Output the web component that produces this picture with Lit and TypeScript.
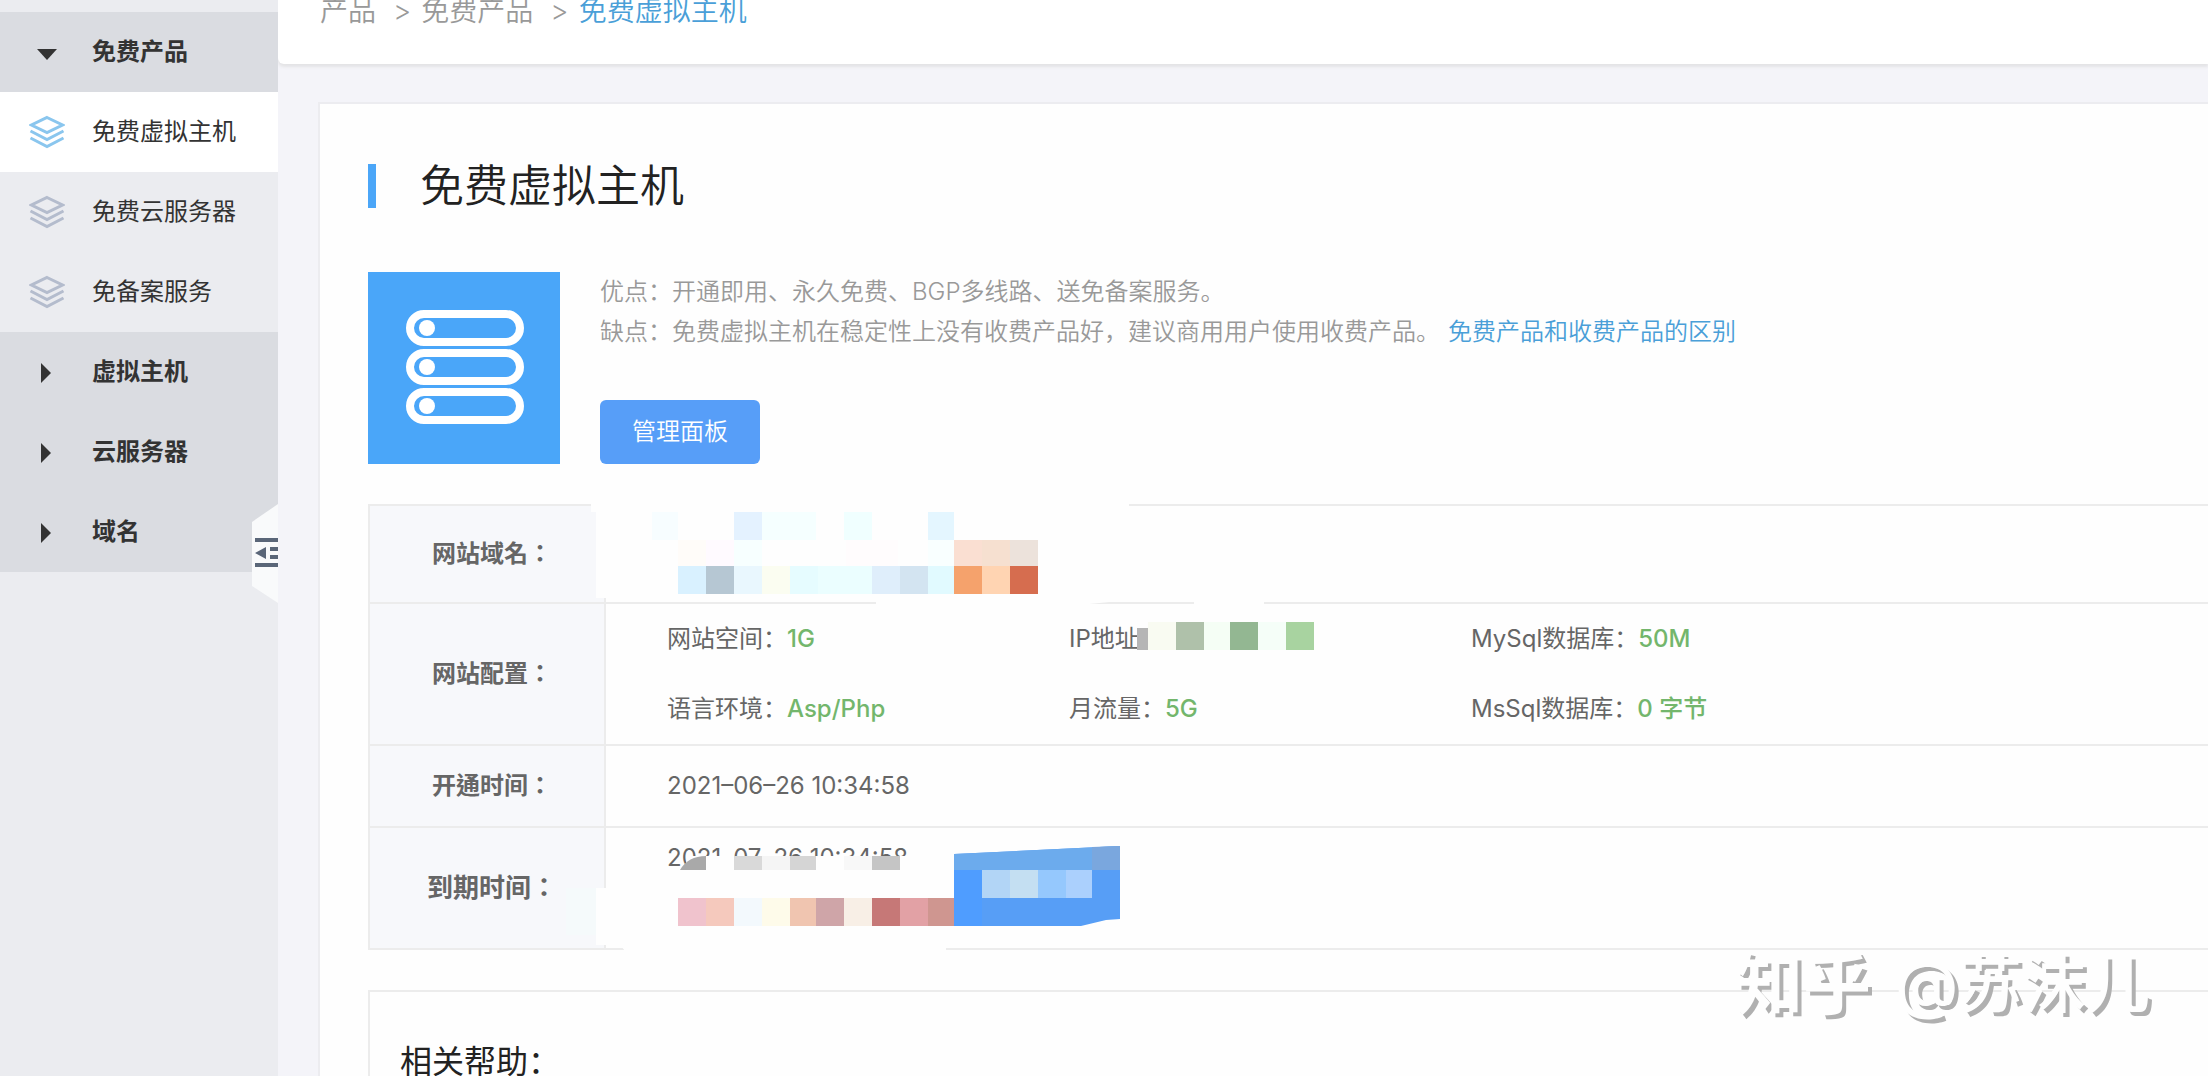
import { LitElement, html, css, svg } from "lit";
import { customElement, state } from "lit/decorators.js";

type Block = [x: number, y: number, width: number, height: number, color: string];

const domainBlocks: Block[] = [
  [652, 512, 26, 28, "#f7fdff"],
  [734, 512, 28, 28, "#e4f2ff"],
  [762, 512, 54, 28, "#f5ffff"],
  [844, 512, 28, 28, "#f0ffff"],
  [928, 512, 26, 28, "#e4f6ff"],
  [678, 540, 28, 26, "#fffcf9"],
  [706, 540, 28, 26, "#fffaff"],
  [734, 540, 28, 26, "#f7ffff"],
  [846, 540, 52, 26, "#fffcfd"],
  [928, 540, 26, 26, "#f9ffff"],
  [954, 540, 28, 26, "#fadfd2"],
  [982, 540, 28, 26, "#f6e0d0"],
  [1010, 540, 28, 26, "#ece2db"],
  [678, 566, 28, 28, "#d9f1ff"],
  [706, 566, 28, 28, "#b6c7d3"],
  [734, 566, 28, 28, "#e9f7fe"],
  [762, 566, 28, 28, "#fbfdf1"],
  [790, 566, 28, 28, "#e6fcff"],
  [818, 566, 54, 28, "#ebfeff"],
  [872, 566, 28, 28, "#dfeefb"],
  [900, 566, 28, 28, "#d3e4f1"],
  [928, 566, 26, 28, "#e1faff"],
  [954, 566, 28, 28, "#f5a26c"],
  [982, 566, 28, 28, "#ffd4b2"],
  [1010, 566, 28, 28, "#d66d4f"],
];

const addressBlocks: Block[] = [
  [1137, 628, 11, 22, "#b5b5b5"],
  [1148, 622, 28, 28, "#f9fbf2"],
  [1176, 622, 28, 28, "#afc1aa"],
  [1204, 622, 26, 28, "#f5fef5"],
  [1230, 622, 28, 28, "#93b792"],
  [1258, 622, 28, 28, "#f5fef8"],
  [1286, 622, 28, 28, "#a8d3a0"],
];

const expiryBlocks: Block[] = [
  [734, 856, 28, 14, "#d9d9d9"],
  [762, 856, 28, 14, "#f5f5f5"],
  [790, 856, 26, 14, "#d5d5d5"],
  [844, 856, 28, 14, "#f8f8f8"],
  [872, 856, 28, 14, "#c5c5c5"],
  [678, 898, 28, 28, "#f0c3cd"],
  [706, 898, 28, 28, "#f5c9bd"],
  [734, 898, 28, 28, "#f3f9fd"],
  [762, 898, 28, 28, "#fefbea"],
  [790, 898, 26, 28, "#f0c5b0"],
  [816, 898, 28, 28, "#cfa5a8"],
  [844, 898, 28, 28, "#f8efe6"],
  [872, 898, 28, 28, "#c67877"],
  [900, 898, 28, 28, "#e2a1a5"],
  [928, 898, 26, 28, "#cf9690"],
];

const renewBlocks: Block[] = [
  [982, 870, 28, 28, "#b2d5f6"],
  [1010, 870, 28, 28, "#c4dff2"],
  [1038, 870, 28, 28, "#95c8fd"],
  [1066, 870, 26, 28, "#abd0fd"],
];

const drawBlocks = (blocks: Block[]) =>
  blocks.map(([x, y, w, h, fill]) => svg`<rect x=${x} y=${y} width=${w} height=${h} fill=${fill}></rect>`);

@customElement("side-nav")
export class SideNav extends LitElement {
  @state() private active = "免费虚拟主机";

  static styles = css`
    :host {
      display: block;
      position: relative;
      padding-top: 12px;
      box-sizing: border-box;
      background: #ebecf0;
    }
    .group,
    .item {
      display: flex;
      align-items: center;
      width: 100%;
      height: 80px;
      padding: 0 0 0 29px;
      gap: 27px;
      border: 0;
      box-sizing: border-box;
      font: inherit;
      font-size: 24px;
      line-height: 40px;
      color: #333;
      text-align: left;
      text-decoration: none;
      cursor: pointer;
    }
    .group {
      background: #dadce1;
      font-weight: 600;
    }
    .item {
      background: #ebecf0;
    }
    .item.active {
      background: #fff;
    }
    .icon {
      flex: none;
      width: 36px;
      height: 36px;
      color: #b4bccd;
    }
    .active .icon {
      color: #8ac6ee;
    }
    .caret {
      color: #333;
    }
    .toggle {
      position: absolute;
      right: 0;
      top: 504px;
      width: 26px;
      height: 100px;
      padding: 0;
      border: 0;
      background: none;
      cursor: pointer;
    }
    .toggle svg {
      display: block;
    }
  `;

  private group(label: string, open = false) {
    return html`<button class="group" aria-expanded=${open}>
      <svg class="icon caret" viewBox="0 0 36 36" aria-hidden="true">
        <path d=${open ? "M8 15H28L18 26Z" : "M12 9L22 19L12 29Z"} fill="currentColor"></path>
      </svg>
      <span>${label}</span>
    </button>`;
  }

  private item(label: string) {
    return html`<a
      class="item ${this.active === label ? "active" : ""}"
      href="#"
      @click=${(e: Event) => {
        e.preventDefault();
        this.active = label;
      }}
    >
      <svg class="icon" viewBox="0 0 36 36" fill="none" stroke="currentColor" stroke-width="3" aria-hidden="true">
        <path d="M18 3.500L33.500 11L18 18.500L2.500 11Z"></path>
        <path d="M1.500 17L18 25.500L34.500 17"></path>
        <path d="M1.500 24L18 32.500L34.500 24"></path>
      </svg>
      <span>${label}</span>
    </a>`;
  }

  render() {
    return html`
      <nav>
        ${this.group("免费产品", true)} ${["免费虚拟主机", "免费云服务器", "免备案服务"].map((l) => this.item(l))}
        ${["虚拟主机", "云服务器", "域名"].map((l) => this.group(l))}
      </nav>
      <button class="toggle" aria-label="收起菜单">
        <svg width="26" height="100" viewBox="0 0 26 100" aria-hidden="true">
          <path d="M26 0L0 18V82L26 99Z" fill="#f9fafb"></path>
          <path d="M3 34H26V38H3ZM3 59H26V63H3ZM18 43H26V47H18ZM18 51H26V55H18ZM3 49L14 43V55Z" fill="#5a6678"></path>
        </svg>
      </button>
    `;
  }
}

@customElement("host-details")
export class HostDetails extends LitElement {
  static styles = css`
    :host {
      display: block;
      position: relative;
      font-size: 24px;
      line-height: 40px;
      color: #666;
    }
    .details {
      width: 100%;
      border-spacing: 0;
      border-top: 2px solid #ececec;
      border-left: 2px solid #ececec;
    }
    .details th,
    .details td {
      padding: 0;
      border-bottom: 2px solid #ececec;
    }
    .details th {
      width: 224px;
      padding-left: 10px;
      border-right: 2px solid #ececec;
      background: #f7f8fb;
      font-family: Inter, "Noto Sans CJK TC", sans-serif;
      font-weight: 600;
      text-align: center;
    }
    .details td {
      padding-left: 61px;
    }
    .domain {
      height: 98px;
    }
    .opened {
      height: 82px;
    }
    .expiry {
      height: 122px;
    }
    .expiry th {
      font-size: 26px;
    }
    .expiry td {
      padding-top: 10px;
      vertical-align: top;
    }
    .specs {
      display: grid;
      grid-template-columns: repeat(3, 402px);
      grid-auto-rows: 70px;
      align-items: center;
      margin: 0;
    }
    .spec {
      display: flex;
    }
    .spec dt,
    .spec dd {
      margin: 0;
    }
    .spec dd {
      color: #73b66c;
      font-weight: 500;
    }
    .time {
      display: block;
    }
    .cover {
      position: absolute;
      left: 0;
      top: 0;
      width: 960px;
      height: 460px;
      pointer-events: none;
    }
  `;

  private spec(label: string, value: string) {
    return html`<div class="spec">
      <dt>${label}</dt>
      <dd>${value}</dd>
    </div>`;
  }

  render() {
    return html`
      <table class="details">
        <tbody>
          <tr class="domain">
            <th scope="row">网站域名：</th>
            <td></td>
          </tr>
          <tr>
            <th scope="row">网站配置：</th>
            <td>
              <dl class="specs">
                ${this.spec("网站空间：", "1G")} ${this.spec("IP地址", "")} ${this.spec("MySql数据库：", "50M")}
                ${this.spec("语言环境：", "Asp/Php")} ${this.spec("月流量：", "5G")}
                ${this.spec("MsSql数据库：", "0 字节")}
              </dl>
            </td>
          </tr>
          <tr class="opened">
            <th scope="row">开通时间：</th>
            <td><time class="time">2021–06–26 10:34:58</time></td>
          </tr>
          <tr class="expiry">
            <th scope="row">到期时间：</th>
            <td><time class="time">2021–07–26 10:34:58</time></td>
          </tr>
        </tbody>
      </table>
      <svg class="cover" viewBox="368 504 960 460" aria-hidden="true">
        <path d="M591 502H1129V600L1050 608H876V600H622V598H596V512H591Z" fill="#fefefe"></path>
        <rect x="1194" y="601" width="70" height="5" fill="#fefefe"></rect>
        ${drawBlocks(domainBlocks)} ${drawBlocks(addressBlocks)}
        <path d="M688 856H946V952H626L620 945H596V888H678V870H684Z" fill="#fefefe"></path>
        <path d="M680 870Q688 856 706 856V870Z" fill="#a9a9a9"></path>
        <path d="M566 888H596V935H566Z" fill="#f5fafb"></path>
        ${drawBlocks(expiryBlocks)}
        <path d="M954 854L1120 846V919L1106 920L1081 926H954Z" fill="#579ef6"></path>
        <path d="M954 854L1120 846V870H954Z" fill="#6cabed"></path>
        <path d="M1092 847L1120 846V870H1092Z" fill="#7aa7de"></path>
        <rect x="954" y="870" width="28" height="56" fill="#4f9dff"></rect>
        ${drawBlocks(renewBlocks)}
      </svg>
    `;
  }
}

@customElement("app-root")
export class AppRoot extends LitElement {
  static styles = css`
    :host {
      display: grid;
      grid-template-columns: 278px minmax(0, 1fr);
      position: relative;
      height: 100vh;
      overflow: hidden;
      background: #f4f4f9;
      font-family: Inter, "Noto Sans CJK SC", sans-serif;
      color: #333;
    }
    .main {
      display: flex;
      flex-direction: column;
      gap: 38px;
      min-height: 0;
    }
    .top {
      display: flex;
      flex: none;
      align-items: flex-end;
      height: 64px;
      padding: 0 42px 33px;
      box-sizing: border-box;
      border-radius: 0 0 0 6px;
      background: #fff;
      box-shadow: 0 3px 3px #e4e4e6;
    }
    .crumbs {
      display: flex;
      gap: 10px;
      font-size: 28px;
      line-height: 40px;
      font-weight: 350;
      color: #999;
    }
    .crumbs a {
      color: inherit;
      text-decoration: none;
    }
    .crumbs .sep {
      padding-left: 7px;
    }
    .crumbs .current {
      color: #4a9fd8;
    }
    .card {
      display: flex;
      flex: 1 0 auto;
      flex-direction: column;
      gap: 40px;
      margin-left: 40px;
      padding: 48px 0 0 48px;
      border: solid #ececf0;
      border-width: 2px 0 0 2px;
      background: #fefefe;
    }
    .title {
      display: flex;
      align-items: center;
      gap: 44px;
      height: 68px;
      margin: 0;
      font-size: 44px;
      line-height: 68px;
      font-weight: 350;
      color: #222;
    }
    .title::before {
      content: "";
      width: 8px;
      height: 44px;
      background: #4ba6f8;
    }
    .intro {
      display: flex;
      gap: 40px;
      margin-top: 12px;
    }
    .product {
      display: block;
      flex: none;
      width: 192px;
      height: 192px;
      background: #4aa6f9;
    }
    .about {
      display: flex;
      flex-direction: column;
      align-items: flex-start;
      justify-content: space-between;
    }
    .text {
      margin: 0;
      font-size: 24px;
      line-height: 40px;
      font-weight: 350;
      color: #999;
    }
    .text a {
      margin-left: 8px;
      color: #4a9fd8;
      text-decoration: none;
    }
    .panel {
      height: 64px;
      padding: 0 32px;
      border: 0;
      border-radius: 6px;
      background: #579ef8;
      font: inherit;
      font-size: 24px;
      line-height: 40px;
      font-weight: 350;
      color: #fff;
      cursor: pointer;
    }
    .help {
      padding: 46px 30px;
      border: solid #ececec;
      border-width: 2px 0 0 2px;
    }
    .help h2 {
      margin: 0;
      font-size: 32px;
      line-height: 48px;
      font-weight: 400;
      color: #222;
    }
    .mark {
      display: flex;
      gap: 24px;
      position: absolute;
      right: 58px;
      bottom: 47px;
      font-size: 64px;
      line-height: 90px;
      font-weight: 500;
      color: #fefefe;
      text-shadow: 4px 4px 0 #b0b0b0;
      pointer-events: none;
    }
    .brand {
      font-size: 68px;
      font-weight: 700;
    }
  `;

  render() {
    return html`
      <side-nav></side-nav>
      <div class="main">
        <header class="top">
          <nav class="crumbs">
            <a href="#">产品</a><span class="sep">&gt;</span><a href="#">免费产品</a><span class="sep">&gt;</span>
            <a class="current" href="#">免费虚拟主机</a>
          </nav>
        </header>
        <main class="card">
          <h1 class="title">免费虚拟主机</h1>
          <section class="intro">
            <svg class="product" viewBox="0 0 192 192" aria-hidden="true">
              ${[56, 95, 134].map(
                (y) => svg`
                  <rect x="42" y=${y - 14} width="110" height="28" rx="14" fill="none" stroke="#fff" stroke-width="8"></rect>
                  <circle cx="59" cy=${y} r="8" fill="#fff"></circle>`
              )}
            </svg>
            <div class="about">
              <p class="text">
                优点：开通即用、永久免费、BGP多线路、送免备案服务。<br />
                缺点：免费虚拟主机在稳定性上没有收费产品好，建议商用用户使用收费产品。<a href="#"
                  >免费产品和收费产品的区别</a
                >
              </p>
              <button class="panel">管理面板</button>
            </div>
          </section>
          <host-details></host-details>
          <section class="help">
            <h2>相关帮助：</h2>
          </section>
        </main>
      </div>
      <div class="mark"><span class="brand">知乎</span><span>@苏沫儿</span></div>
    `;
  }
}
